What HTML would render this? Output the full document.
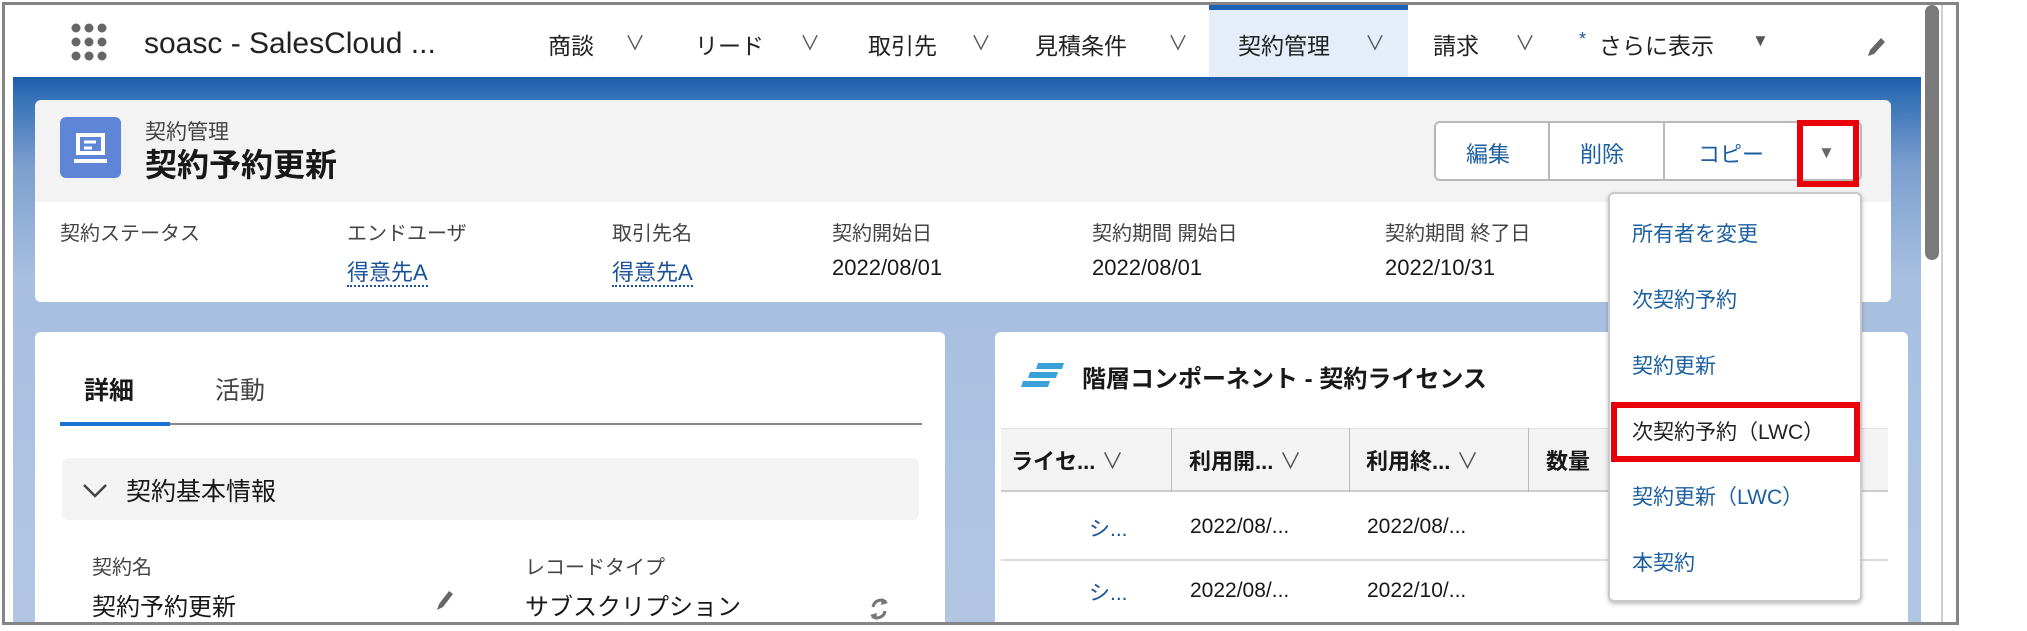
<!DOCTYPE html>
<html><head><meta charset="utf-8"><style>
*{margin:0;padding:0;box-sizing:border-box}
body{width:2027px;height:631px;background:#fff;position:relative;overflow:hidden;font-family:"Liberation Sans","Noto Sans CJK JP",sans-serif;color:#181818}
.a{position:absolute;white-space:nowrap}
#frame{position:absolute;left:2px;top:2px;width:1957px;height:623px;border:3px solid #858585;overflow:hidden;background:#fff}
#band{position:absolute;left:8px;top:72px;width:1908px;height:560px;background:linear-gradient(#1b5ea9 0px,#3571b7 20px,#7d9fcf 90px,#a7bfe0 200px,#b3c7e4 560px)}
.nav{font-size:23px;color:#222;top:22px}
.chev{color:#555;font-size:20px}
.card{position:absolute;background:#fff;border-radius:6px}
.lbl{font-size:20px;color:#444}
.val{font-size:22px;color:#181818}
.link{color:#1b5297;border-bottom:2px dotted #1b5297}
.dd{font-size:21px;color:#1b5fa0;left:1627px}
</style></head><body>
<div id="frame">
<div id="band"></div>
<svg class="a" style="left:65px;top:17px" width="44" height="44"><g fill="#666">
<circle cx="6" cy="6" r="4.5"/><circle cx="19" cy="6" r="4.5"/><circle cx="32" cy="6" r="4.5"/>
<circle cx="6" cy="20" r="4.5"/><circle cx="19" cy="20" r="4.5"/><circle cx="32" cy="20" r="4.5"/>
<circle cx="6" cy="34" r="4.5"/><circle cx="19" cy="34" r="4.5"/><circle cx="32" cy="34" r="4.5"/></g></svg>
<div class="a" style="left:139px;top:22px;font-size:30px;color:#222">soasc - SalesCloud ...</div>
<div class="a" style="left:1204px;top:0;width:199px;height:72px;background:#e5eef8;border-top:5px solid #1b63b5"></div>
<div class="a nav" style="left:543px">商談</div><div class="a nav chev" style="left:620px">∨</div>
<div class="a nav" style="left:690px">リード</div><div class="a nav chev" style="left:795px">∨</div>
<div class="a nav" style="left:863px">取引先</div><div class="a nav chev" style="left:966px">∨</div>
<div class="a nav" style="left:1030px">見積条件</div><div class="a nav chev" style="left:1163px">∨</div>
<div class="a nav" style="left:1233px">契約管理</div><div class="a nav chev" style="left:1360px">∨</div>
<div class="a nav" style="left:1428px">請求</div><div class="a nav chev" style="left:1510px">∨</div>
<div class="a nav" style="left:1574px;font-size:18px;top:24px;color:#1b5297">*</div>
<div class="a nav" style="left:1594px">さらに表示</div><div class="a nav" style="left:1747px;font-size:17px;top:26px;color:#555">▼</div>
<svg class="a" style="left:1860px;top:30px" width="22" height="24"><path d="M3 21 L5 15 L16 3 L20 7 L9 19 Z" fill="#666"/></svg>
<div class="a" style="left:1920px;top:0;width:14px;height:255px;background:#7a7a7a;border-radius:7px"></div>
<div class="a" style="left:1936px;top:0;width:2px;height:620px;background:#cfcfcf"></div>
<div class="card" style="left:30px;top:95px;width:1856px;height:202px;background:#f3f3f3;overflow:hidden">
<div class="a" style="left:0;top:102px;width:1856px;height:100px;background:#fff"></div>
</div>
<div class="a" style="left:55px;top:112px;width:61px;height:61px;background:#5f86d6;border-radius:6px"></div>
<svg class="a" style="left:55px;top:112px" width="61" height="61"><g fill="none" stroke="#fff" stroke-width="4"><path d="M18 18 H43 V36 H18 Z"/><path d="M14 44 H47"/></g><path d="M24 25 H36 M24 31 H32" stroke="#fff" stroke-width="3"/></svg>
<div class="a" style="left:140px;top:111px;font-size:21px;color:#444">契約管理</div>
<div class="a" style="left:140px;top:135px;font-size:32px;font-weight:bold">契約予約更新</div>
<div class="a lbl" style="left:55px;top:212px">契約ステータス</div>
<div class="a lbl" style="left:342px;top:212px">エンドユーザ</div>
<div class="a val" style="left:342px;top:250px"><span class="link">得意先A</span></div>
<div class="a lbl" style="left:607px;top:212px">取引先名</div>
<div class="a val" style="left:607px;top:250px"><span class="link">得意先A</span></div>
<div class="a lbl" style="left:827px;top:212px">契約開始日</div>
<div class="a val" style="left:827px;top:250px">2022/08/01</div>
<div class="a lbl" style="left:1087px;top:212px">契約期間 開始日</div>
<div class="a val" style="left:1087px;top:250px">2022/08/01</div>
<div class="a lbl" style="left:1380px;top:212px">契約期間 終了日</div>
<div class="a val" style="left:1380px;top:250px">2022/10/31</div>
<div class="a" style="left:1429px;top:116px;width:428px;height:60px;background:#fff;border:2px solid #b8b8b8;border-radius:6px"></div>
<div class="a" style="left:1543px;top:116px;width:2px;height:60px;background:#b8b8b8"></div>
<div class="a" style="left:1658px;top:116px;width:2px;height:60px;background:#b8b8b8"></div>
<div class="a" style="left:1461px;top:132px;font-size:22px;color:#1b5fa0">編集</div>
<div class="a" style="left:1575px;top:132px;font-size:22px;color:#1b5fa0">削除</div>
<div class="a" style="left:1693px;top:132px;font-size:22px;color:#1b5fa0">コピー</div>
<div class="a" style="left:1792px;top:115px;width:62px;height:67px;border:6px solid #e8000b"></div>
<div class="a" style="left:1813px;top:138px;font-size:17px;color:#666">▼</div>
<div class="card" style="left:30px;top:327px;width:910px;height:320px"></div>
<div class="a" style="left:79px;top:366px;font-size:25px;font-weight:bold">詳細</div>
<div class="a" style="left:210px;top:366px;font-size:25px;color:#444">活動</div>
<div class="a" style="left:55px;top:418px;width:862px;height:2px;background:#888"></div>
<div class="a" style="left:55px;top:417px;width:110px;height:4px;background:#1b73d3"></div>
<div class="a" style="left:57px;top:453px;width:857px;height:62px;background:#f3f3f3;border-radius:6px"></div>
<svg class="a" style="left:77px;top:478px" width="26" height="16"><path d="M2 2 L13 13 L24 2" fill="none" stroke="#444" stroke-width="2.5"/></svg>
<div class="a" style="left:121px;top:467px;font-size:25px">契約基本情報</div>
<div class="a lbl" style="left:87px;top:546px">契約名</div>
<div class="a" style="left:87px;top:582px;font-size:24px">契約予約更新</div>
<svg class="a" style="left:430px;top:583px" width="20" height="24"><path d="M2 22 L4 16 L14 3 L18 6 L8 19 Z" fill="#666"/></svg>
<div class="a lbl" style="left:520px;top:546px">レコードタイプ</div>
<div class="a" style="left:520px;top:582px;font-size:24px">サブスクリプション</div>
<svg class="a" style="left:862px;top:590px" width="24" height="28"><g fill="none" stroke="#777" stroke-width="3"><path d="M6 12 A8 8 0 0 1 19 7"/><path d="M18 16 A8 8 0 0 1 5 21"/></g><path d="M15 3 L21 8 L14 10 Z M9 25 L3 20 L10 18 Z" fill="#777"/></svg>
<div class="card" style="left:990px;top:327px;width:913px;height:320px"></div>
<svg class="a" style="left:1015px;top:356px" width="46" height="30"><g fill="#3aa0d8"><path d="M18 2 H44 L42 8 H16 Z"/><path d="M10 11 H38 L36 17 H8 Z"/><path d="M3 20 H30 L28 26 H1 Z"/></g></svg>
<div class="a" style="left:1077px;top:354px;font-size:24px;font-weight:bold">階層コンポーネント - 契約ライセンス</div>
<div class="a" style="left:996px;top:423px;width:887px;height:64px;background:#f3f3f3;border-top:1px solid #ddd;border-bottom:2px solid #ccc"></div>
<div class="a" style="left:1166px;top:423px;width:1px;height:64px;background:#bbb"></div>
<div class="a" style="left:1344px;top:423px;width:1px;height:64px;background:#bbb"></div>
<div class="a" style="left:1523px;top:423px;width:1px;height:64px;background:#bbb"></div>
<div class="a" style="left:1006px;top:439px;font-size:22px;font-weight:bold">ライセ... <span style="font-weight:normal;color:#555">∨</span></div>
<div class="a" style="left:1184px;top:439px;font-size:22px;font-weight:bold">利用開... <span style="font-weight:normal;color:#555">∨</span></div>
<div class="a" style="left:1361px;top:439px;font-size:22px;font-weight:bold">利用終... <span style="font-weight:normal;color:#555">∨</span></div>
<div class="a" style="left:1541px;top:439px;font-size:22px;font-weight:bold">数量</div>
<div class="a" style="left:996px;top:554px;width:887px;height:2px;background:#ddd"></div>
<div class="a" style="left:996px;top:618px;width:887px;height:2px;background:#ddd"></div>
<div class="a" style="left:1084px;top:508px;font-size:21px;color:#1b5297">シ...</div>
<div class="a" style="left:1185px;top:510px;font-size:21px">2022/08/...</div>
<div class="a" style="left:1362px;top:510px;font-size:21px">2022/08/...</div>
<div class="a" style="left:1084px;top:572px;font-size:21px;color:#1b5297">シ...</div>
<div class="a" style="left:1185px;top:574px;font-size:21px">2022/08/...</div>
<div class="a" style="left:1362px;top:574px;font-size:21px">2022/10/...</div>
<div class="a" style="left:1603px;top:187px;width:254px;height:410px;background:#fff;border:2px solid #c9c9c9;border-radius:6px;box-shadow:0 2px 4px rgba(0,0,0,.25)"></div>
<div class="a dd" style="top:213px">所有者を変更</div>
<div class="a dd" style="top:279px">次契約予約</div>
<div class="a dd" style="top:345px">契約更新</div>
<div class="a" style="left:1606px;top:397px;width:249px;height:60px;border:6px solid #e8000b"></div>
<div class="a dd" style="top:411px;color:#222">次契約予約（LWC）</div>
<div class="a dd" style="top:476px">契約更新（LWC）</div>
<div class="a dd" style="top:542px">本契約</div>
</div>
</body></html>
